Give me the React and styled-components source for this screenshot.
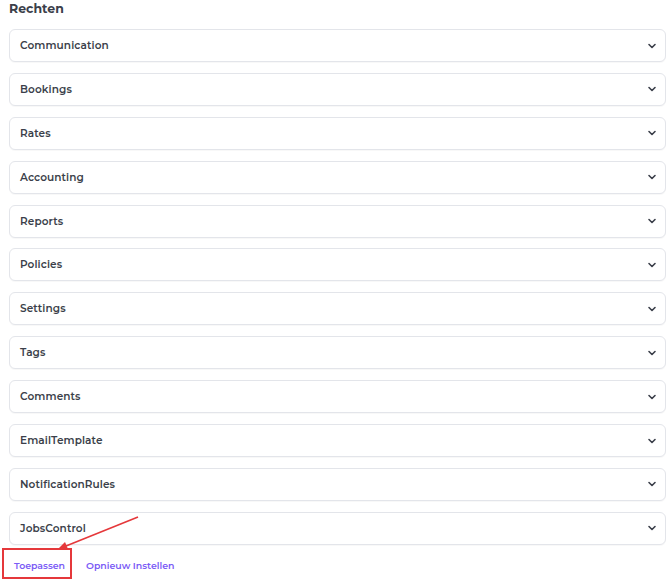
import React from "react";
import styled, { createGlobalStyle } from "styled-components";

const Global = createGlobalStyle`
  html, body { margin: 0; padding: 0; background: #fff; }
  body { font-family: "Montserrat", "Inter", "Noto Sans", sans-serif; }
`;

const Page = styled.div`
  position: relative;
  width: 670px;
  height: 580px;
  box-sizing: border-box;
  padding: 1px 4px 0 9px;
  overflow: hidden;
`;

const Title = styled.h2`
  margin: 0 0 13px 0;
  font-size: 12.5px;
  line-height: 15px;
  font-weight: 700;
  color: #3b3f4a;
`;

const List = styled.div`
  display: flex;
  flex-direction: column;
  gap: 10.9px;
`;

const Card = styled.div`
  height: 33px;
  box-sizing: border-box;
  border: 1px solid #e3e5ea;
  border-radius: 6px;
  background: #fff;
  display: flex;
  align-items: center;
  justify-content: space-between;
  padding: 0 8px 0 10px;
  box-shadow: 0 1px 1px rgba(0,0,0,0.03);
`;

const Label = styled.span`
  font-size: 10.5px;
  font-weight: 600;
  color: #3b3f4a;
  letter-spacing: 0.1px;
`;

const Actions = styled.div`
  display: flex;
  align-items: center;
  gap: 10px;
  margin: 3px 0 0 -7px;
`;

const LinkButton = styled.button`
  background: none;
  border: ${p => (p.$highlight ? "2px solid #e5383b" : "2px solid transparent")};
  height: 31px;
  box-sizing: border-box;
  padding: ${p => (p.$highlight ? "4px 5px 0 10px" : "4px 2px 0")};
  font-family: inherit;
  font-size: 9.4px;
  font-weight: 600;
  color: #7b5cf6;
  cursor: pointer;
`;

const Arrow = styled.svg`
  position: absolute;
  left: 0;
  top: 0;
  pointer-events: none;
`;

const Chevron = () => (
  <svg width="10" height="10" viewBox="0 0 10 10">
    <path d="M2 3.5 L5 6.5 L8 3.5" fill="none" stroke="#3b3f4a" strokeWidth="1.6" strokeLinecap="round" strokeLinejoin="round" />
  </svg>
);

const items = [
  "Communication",
  "Bookings",
  "Rates",
  "Accounting",
  "Reports",
  "Policies",
  "Settings",
  "Tags",
  "Comments",
  "EmailTemplate",
  "NotificationRules",
  "JobsControl",
];

export default function App() {
  return (
    <>
      <Global />
      <Page>
        <Title>Rechten</Title>
        <List>
          {items.map(i => (
            <Card key={i}>
              <Label>{i}</Label>
              <Chevron />
            </Card>
          ))}
        </List>
        <Actions>
          <LinkButton $highlight>Toepassen</LinkButton>
          <LinkButton>Opnieuw Instellen</LinkButton>
        </Actions>
        <Arrow width="670" height="580">
          <line x1="138" y1="517" x2="66" y2="546" stroke="#e5383b" strokeWidth="1.6" />
          <polygon points="58,549 65,542 68,549" fill="#e5383b" />
        </Arrow>
      </Page>
    </>
  );
}
